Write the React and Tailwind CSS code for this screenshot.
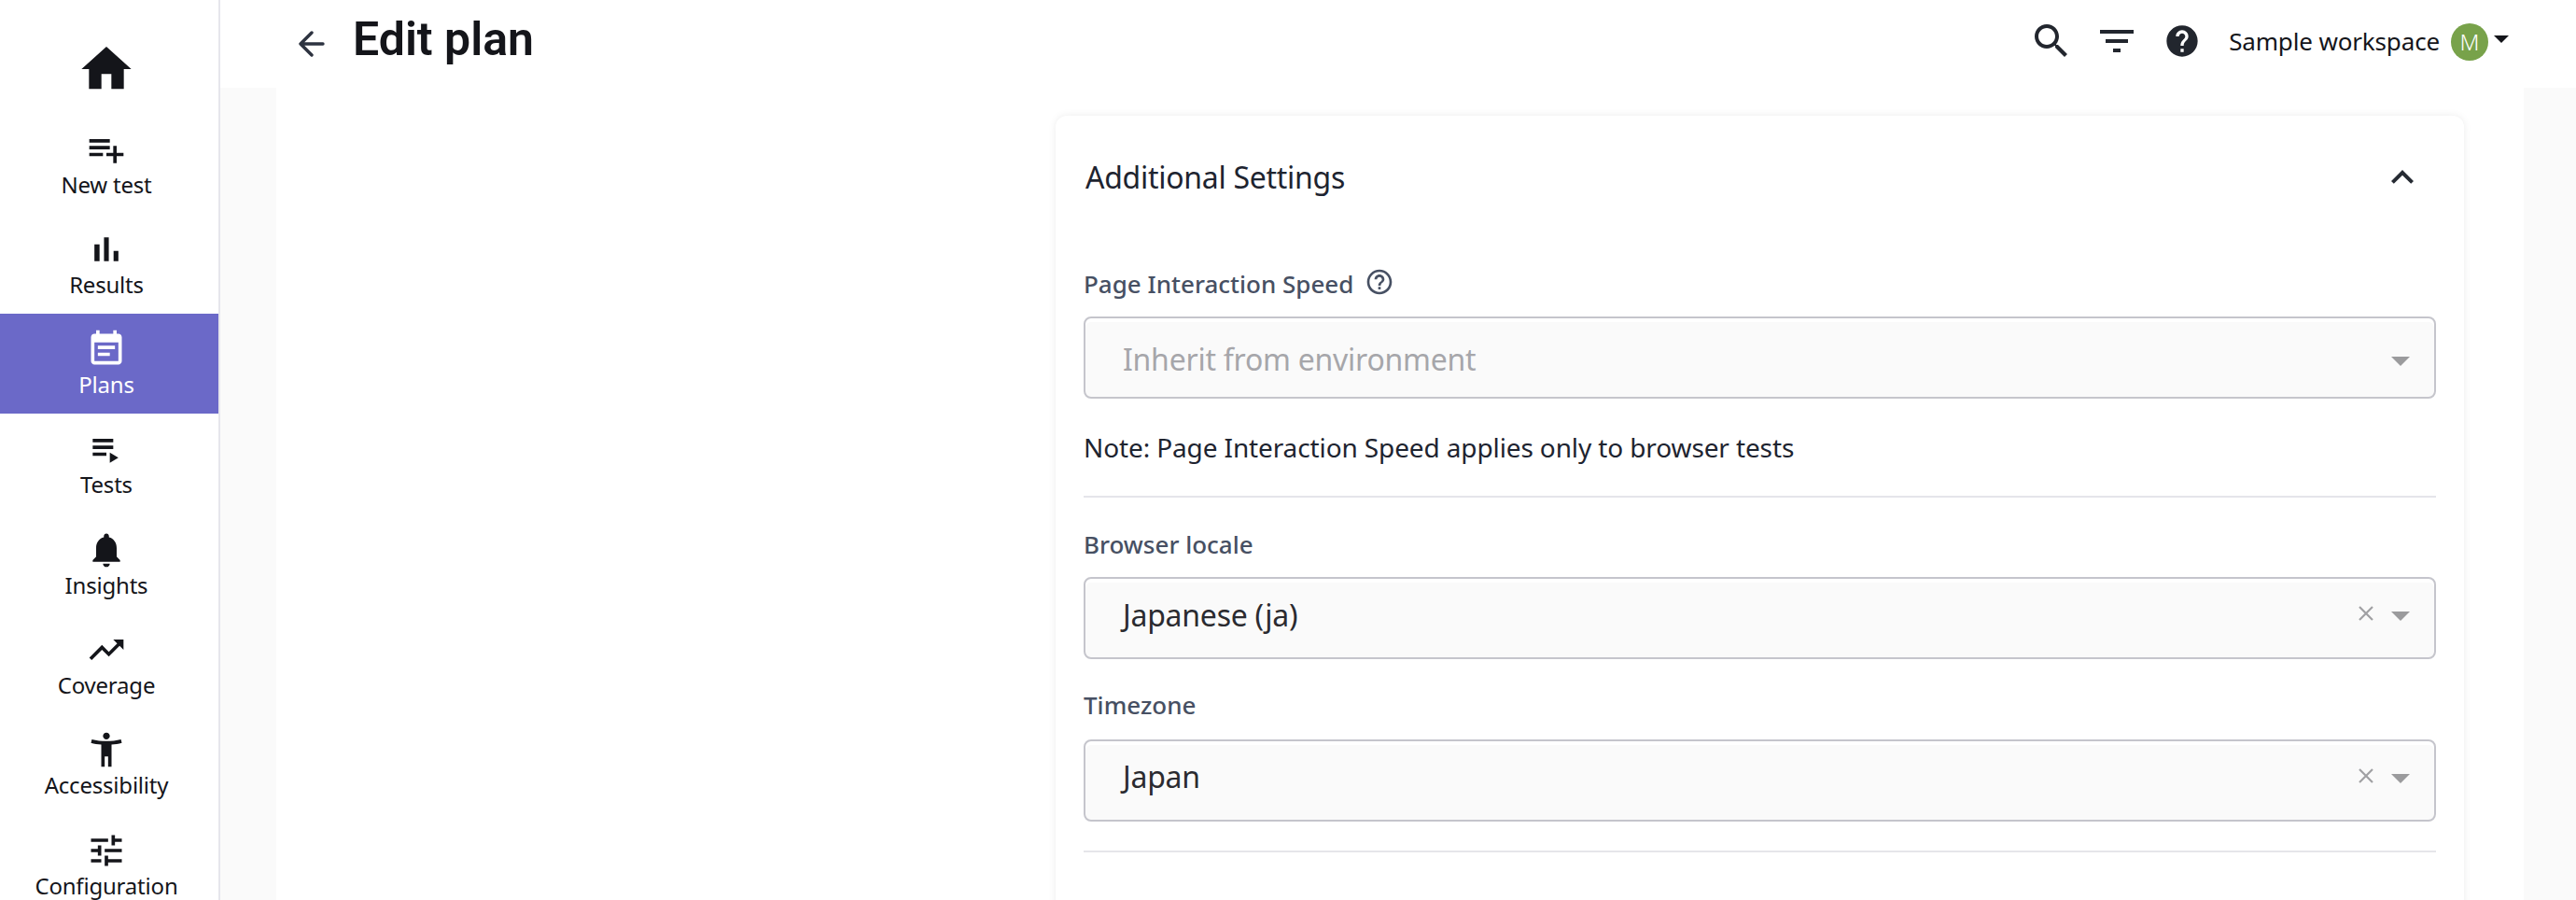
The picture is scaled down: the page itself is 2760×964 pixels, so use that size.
const navItems = [
    {
        label: "New test",
        d: "M14 10H2v2h12v-2zm0-4H2v2h12V6zm4 8v-4h-2v4h-4v2h4v4h2v-4h4v-2h-4zM2 16h8v-2H2v2z",
    },
    {
        label: "Results",
        d: "M5 9.2h3V19H5zM10.6 5h2.8v14h-2.8zm5.6 8H19v6h-2.8z",
    },
    {
        label: "Plans",
        active: true,
        d: "M17 10H7v2h10v-2zm2-7h-1V1h-2v2H8V1H6v2H5c-1.11 0-1.99.9-1.99 2L3 19c0 1.1.89 2 2 2h14c1.1 0 2-.9 2-2V5c0-1.1-.9-2-2-2zm0 16H5V8h14v11zm-5-5H7v2h7v-2z",
    },
    {
        label: "Tests",
        d: "M4 10h12v2H4zm0-4h12v2H4zm0 8h8v2H4zm10 0v6l5-3z",
    },
    {
        label: "Insights",
        d: "M12 22c1.1 0 2-.9 2-2h-4c0 1.1.89 2 2 2zm6-6v-5c0-3.07-1.64-5.64-4.5-6.32V4c0-.83-.67-1.5-1.5-1.5s-1.5.67-1.5 1.5v.68C7.63 5.36 6 7.92 6 11v5l-2 2v1h16v-1l-2-2z",
    },
    {
        label: "Coverage",
        d: "M16 6l2.29 2.29-4.88 4.88-4-4L2 16.59 3.41 18l6-6 4 4 6.3-6.29L22 12V6z",
    },
    {
        label: "Accessibility",
        d: "M20.5 6c-2.61.7-5.67 1-8.5 1s-5.89-.3-8.5-1L3 8c1.86.5 4 .83 6 1v13h2v-6h2v6h2V9c2-.17 4.14-.5 6-1l-.5-2zM12 6c1.1 0 2-.9 2-2s-.9-2-2-2-2 .9-2 2 .9 2 2 2z",
    },
    {
        label: "Configuration",
        d: "M3 17v2h6v-2H3zM3 5v2h10V5H3zm10 16v-2h8v-2h-8v-2h-2v6h2zM7 9v2H3v2h4v2h2V9H7zm14 4v-2H11v2h10zm-6-4h2V7h4V5h-4V3h-2v6z",
    },
];

function Icon({ d, className }) {
    return (
        <svg viewBox="0 0 24 24" fill="currentColor" className={className}>
            <path d={d} />
        </svg>
    );
}

function Sidebar() {
    return (
        <aside className="flex h-full w-[236px] shrink-0 flex-col border-r-2 border-[#e6e6ec] bg-white pt-[42px] text-[#14151a]">
            <div className="mb-[15.5px] flex justify-center pr-[6px]">
                <Icon
                    d="M10 20v-6h4v6h5v-8h3L12 3 2 12h3v8z"
                    className="h-[64px] w-[64px]"
                />
            </div>
            {navItems.map((item) => (
                <div
                    key={item.label}
                    className={`flex h-[107.3px] shrink-0 flex-col items-center pt-[16px] pr-[6px] ${
                        item.active ? "bg-[#6b69c8] text-white" : ""
                    }`}
                >
                    <Icon d={item.d} className="h-[44px] w-[44px]" />
                    <span className="text-[24px] leading-[32px] tracking-[-0.2px]">{item.label}</span>
                </div>
            ))}
        </aside>
    );
}

function Header() {
    return (
        <header className="flex h-[94px] shrink-0 items-center bg-white pl-[84px]">
            <svg
                viewBox="0 0 28 28"
                fill="none"
                stroke="#2d3340"
                strokeWidth="3.4"
                strokeLinecap="round"
                strokeLinejoin="round"
                className="h-[28px] w-[28px]"
            >
                <path d="M26 14H2M14 2 2 14l12 12" />
            </svg>
            <h1 className="mb-[10px] ml-[30px] text-[50px] leading-[60px] font-semibold text-[#14151a] [font-family:Roboto,sans-serif]">
                Edit plan
            </h1>
            <div className="mb-[6px] ml-auto flex items-center text-[#22262e]">
                <Icon
                    d="M15.5 14h-.79l-.28-.27C15.41 12.59 16 11.11 16 9.5 16 5.91 13.09 3 9.5 3S3 5.91 3 9.5 5.91 16 9.5 16c1.61 0 3.09-.59 4.23-1.57l.27.28v.79l5 4.99L20.49 19l-4.99-5zm-6 0C7.01 14 5 11.99 5 9.5S7.01 5 9.5 5 14 7.01 14 9.5 11.99 14 9.5 14z"
                    className="h-[48px] w-[48px]"
                />
                <Icon
                    d="M10 18h4v-2h-4v2zM3 6v2h18V6H3zm3 7h12v-2H6v2z"
                    className="ml-[22px] h-[48px] w-[48px]"
                />
                <Icon
                    d="M12 2C6.48 2 2 6.48 2 12s4.48 10 10 10 10-4.48 10-10S17.52 2 12 2zm1 17h-2v-2h2v2zm2.07-7.75l-.9.92C13.45 12.9 13 13.5 13 15h-2v-.5c0-1.1.45-2.1 1.17-2.83l1.24-1.26c.37-.36.59-.86.59-1.41 0-1.1-.9-2-2-2s-2 .9-2 2H8c0-2.21 1.79-4 4-4s4 1.79 4 4c0 .88-.36 1.68-.93 2.25z"
                    className="ml-[26px] h-[40px] w-[40px]"
                />
                <span className="ml-[30px] text-[26px] leading-[36px] tracking-[-0.15px] text-[#14151a]">
                    Sample workspace
                </span>
                <span className="mt-[2px] ml-[12px] flex h-[40px] w-[40px] items-center justify-center rounded-full bg-[#78a24a] text-[24px] font-light text-white">
                    M
                </span>
                <span className="mr-[72px] mb-[4px] ml-[6px] h-0 w-0 border-x-[8px] border-t-[8px] border-x-transparent border-t-[#14151a]" />
            </div>
        </header>
    );
}

function SelectBox({ value, placeholder, clearable, textClass, arrowClass }) {
    return (
        <div className="flex h-[88px] items-center rounded-[8px] border-2 border-[#c5c5cc] bg-[#fafafa] pr-[26px] pl-[40px] shadow-[inset_0_4px_0_#ffffff]">
            <span
                className={`text-[32px] leading-[44px] tracking-[-0.25px] ${textClass} ${
                    placeholder ? "text-[#a6a6aa]" : "text-[#2b2b30]"
                }`}
            >
                {value}
            </span>
            {clearable && (
                <svg
                    viewBox="0 0 16 16"
                    fill="none"
                    stroke="#a0a0a3"
                    strokeWidth="2.2"
                    className="mb-[10px] ml-auto h-[16px] w-[16px]"
                >
                    <path d="M1 1l14 14M15 1 1 15" />
                </svg>
            )}
            <span
                className={`h-0 w-0 border-x-[10px] border-t-[10px] border-x-transparent border-t-[#9b9b9d] ${arrowClass} ${
                    clearable ? "ml-[19px]" : "ml-auto"
                }`}
            />
        </div>
    );
}

function Settings() {
    return (
        <section className="rounded-[12px] bg-white px-[30px] shadow-[0_0_8px_rgba(0,0,0,0.08)]">
            <div className="flex h-[132px] items-center justify-between pl-[2px]">
                <h2 className="text-[32px] leading-[44px] tracking-[-0.28px] text-[#1e2430]">
                    Additional Settings
                </h2>
                <Icon
                    d="M12 8l-6 6 1.41 1.41L12 10.83l4.59 4.58L18 14z"
                    className="mr-[12px] h-[48px] w-[48px] text-[#262b33]"
                />
            </div>

            <label className="mt-[24px] flex h-[48px] items-center text-[26px] font-medium text-[#475063]">
                Page Interaction Speed
                <Icon
                    d="M11 18h2v-2h-2v2zm1-16C6.48 2 2 6.48 2 12s4.48 10 10 10 10-4.48 10-10S17.52 2 12 2zm0 18c-4.41 0-8-3.59-8-8s3.59-8 8-8 8 3.59 8 8-3.59 8-8 8zm0-14c-2.21 0-4 1.79-4 4h2c0-1.1.9-2 2-2s2 .9 2 2c0 2-3 1.75-3 5h2c0-2.25 3-2.5 3-5 0-2.21-1.79-4-4-4z"
                    className="mb-[4px] ml-[12px] h-[32px] w-[32px]"
                />
            </label>
            <div className="mt-[11px]">
                <SelectBox
                    value="Inherit from environment"
                    placeholder
                    textClass="mt-[4px]"
                    arrowClass="mt-[8px]"
                />
            </div>
            <p className="mt-[30px] h-[44px] text-[28px] leading-[44px] tracking-[-0.12px] text-[#1e2430]">
                Note: Page Interaction Speed applies only to browser tests
            </p>
            <div className="mt-[30px] h-[2px] bg-[#e5e5ea]" />

            <label className="mt-[26px] flex h-[48px] items-center text-[26px] font-medium text-[#475063]">
                Browser locale
            </label>
            <div className="mt-[11px]">
                <SelectBox
                    value="Japanese (ja)"
                    clearable
                    textClass="mb-[6px]"
                    arrowClass="mb-[4px]"
                />
            </div>

            <label className="mt-[25px] flex h-[48px] items-center text-[26px] font-medium text-[#475063]">
                Timezone
            </label>
            <div className="mt-[13px]">
                <SelectBox value="Japan" clearable textClass="mb-[8px]" arrowClass="mb-[4px]" />
            </div>
            <div className="mt-[31px] h-[2px] bg-[#e5e5ea]" />
            <div className="h-[200px]" />
        </section>
    );
}

export default function App() {
    return (
        <div className="flex h-[964px] w-[2760px] overflow-hidden bg-white [font-family:'Noto_Sans',sans-serif]">
            <Sidebar />
            <main className="flex min-w-0 flex-1 flex-col">
                <Header />
                <div className="min-h-0 flex-1 bg-[#fafafa] pr-[56px] pl-[60px]">
                    <div className="h-full bg-white pt-[30px] pr-[64px] pl-[835px]">
                        <Settings />
                    </div>
                </div>
            </main>
        </div>
    );
}
